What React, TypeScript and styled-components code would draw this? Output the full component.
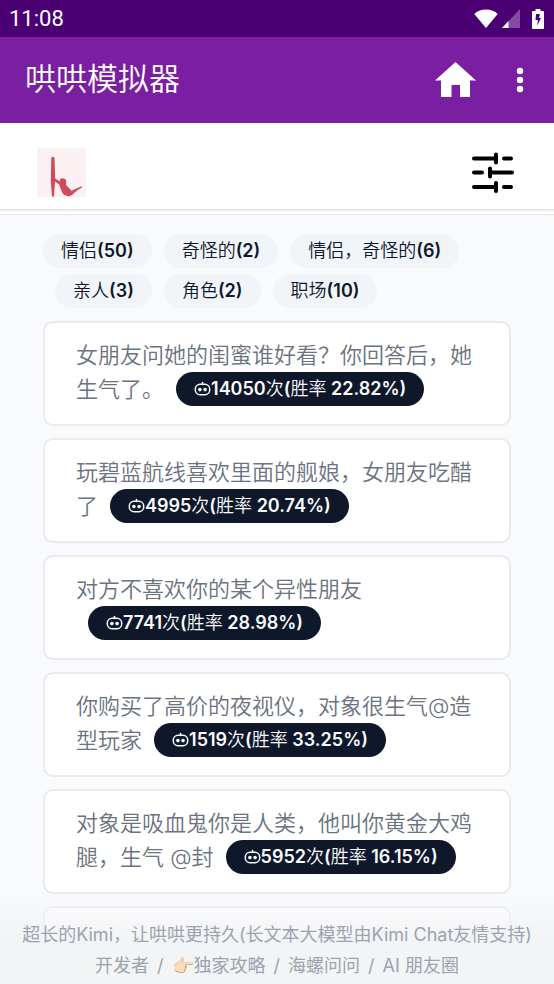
import React from "react";
import styled, { createGlobalStyle } from "styled-components";

const GlobalStyle = createGlobalStyle`
  *, *::before, *::after { box-sizing: border-box; }
  html, body { margin: 0; background: #f8fafc; }
  body { font-family: Inter, "Noto Sans CJK SC", sans-serif; }
  button { font: inherit; color: inherit; border: 0; background: none; padding: 0; cursor: pointer; }
  a { color: inherit; text-decoration: none; }
  svg { display: block; flex: none; }
`;

const Screen = styled.div`
  height: 100vh;
  display: flex;
  flex-direction: column;
  overflow: hidden;
  position: relative;
`;

const StatusBar = styled.div`
  flex: none;
  height: 37px;
  padding: 0 10px 0 9px;
  display: flex;
  align-items: center;
  justify-content: space-between;
  background: #4a0072;
  color: #fff;
  font: 400 22px/1 Roboto, sans-serif;
`;

const StatusIcons = styled.div`
  display: flex;
  align-items: center;
  gap: 4px;
`;

const BatterySlot = styled.span`
  margin-left: 8px;
`;

const AppBar = styled.header`
  flex: none;
  height: 86px;
  padding: 0 24px 0 25px;
  display: flex;
  align-items: center;
  justify-content: space-between;
  background: #7b1fa2;
  color: #fff;
`;

const AppTitle = styled.h1`
  margin: 0;
  font: 350 31px/40px Roboto, "Noto Sans CJK SC", sans-serif;
`;

const AppActions = styled.div`
  display: flex;
  align-items: center;
  gap: 34px;
`;

const SiteHeader = styled.div`
  flex: none;
  height: 92px;
  padding: 25px 39px 0 37px;
  display: flex;
  justify-content: space-between;
  background: linear-gradient(#e5e7eb, #e5e7eb) 0 86px / 100% 2px no-repeat, #fff;
  border-bottom: 1px solid #e5e7eb;
`;

const SettingsButton = styled.button`
  height: 49px;
`;

const Content = styled.main`
  flex: 1;
  min-height: 0;
  overflow: hidden;
  padding: 19px 43px 0;
  background: #f8fafc;
`;

const Tags = styled.nav`
  display: flex;
  flex-wrap: wrap;
  row-gap: 6px;
  margin-bottom: 13px;
`;

const Tag = styled.button`
  height: 34px;
  padding: 0 18px;
  border-radius: 17px;
  background: #f1f5f9;
  color: #0f172a;
  font-size: 18px;
  font-weight: 600;
  line-height: 34px;

  & + & { margin-left: 12px; }
`;

const Label = styled.span`
  font-weight: 350;
`;

const Cards = styled.div`
  display: flex;
  flex-direction: column;
  gap: 12px;
`;

const Card = styled.a`
  display: block;
  flex: none;
  min-height: 105px;
  padding: 15px 30px 16px 31px;
  background: #fff;
  border: 2px solid #e8eaee;
  border-radius: 10px;
  color: #6b7280;
  font-size: 22px;
  font-weight: 350;
  line-height: 34px;
`;

const Stats = styled.span`
  display: inline-flex;
  align-items: center;
  vertical-align: top;
  height: 34px;
  margin-left: 12px;
  padding: 0 18px;
  border-radius: 17px;
  background: #0f172a;
  color: #f8fafc;
  font-size: 18px;
  font-weight: 600;
  white-space: nowrap;
`;

const Footer = styled.footer`
  position: absolute;
  inset: auto 0 0;
  padding: 30px 8px 3px;
  background: linear-gradient(rgba(243, 244, 246, 0), #f3f4f6 50%);
  color: #9ca3af;
  font-size: 18px;
  line-height: 31px;
`;

const FooterLine = styled.div`
  display: flex;
  justify-content: center;
  gap: 8px;
  white-space: nowrap;
`;

const Wifi = () => (
  <svg width="24" height="19" viewBox="0 0 24 19" fill="#fff">
    <path d="M12 19 .3 5C3 2 7 .5 12 .5S21 2 23.700 5z" />
  </svg>
);

const Signal = () => (
  <svg width="18" height="19" viewBox="0 0 18 19">
    <path d="M0 19 18 0v19z" fill="#854ba0" />
    <path d="M0 19 6.500 12v7z" fill="#fff" />
  </svg>
);

const Battery = () => (
  <svg width="12" height="20" viewBox="0 0 12 20">
    <path d="M3.500 0h5v2H11q1 0 1 1v16q0 1-1 1H1q-1 0-1-1V3q0-1 1-1h2.500z" fill="#fff" />
    <path d="M4 5h4L7 9h2l-4 8 1-6H3.500z" fill="#4a0072" />
  </svg>
);

const Home = () => (
  <svg width="41" height="36" viewBox="0 0 41 36" fill="#fff">
    <path d="M20.500 0 41 18.500h-6V35H25V23h-8.500v12H6V18.500H0z" />
  </svg>
);

const Dots = () => (
  <svg width="20" height="26" viewBox="0 0 20 26" fill="#fff">
    <circle cx="10" cy="4" r="3.200" />
    <circle cx="10" cy="13" r="3.200" />
    <circle cx="10" cy="22" r="3.200" />
  </svg>
);

const Logo = () => (
  <svg width="49" height="49" viewBox="0 0 49 49">
    <path d="M0 0h49v49H0z" fill="#fcf1f2" />
    <path
      d="M14.300 10.500c0-2.500 3.200-2.500 3.200 0l.7 20 4.600 3c-1-4.300 6-4.500 6.500-.5.200 1.800-.8 2.600-.2 4l5.400 5.800 9.500-4.300c1.500-.4 1.400.6.5 1.200L40 42.500 35 47l-3.500 1.500-5-2c-2-3-3.500-7.500-4.300-10l-4.200-3L17 48.500h-2L13.800 33z"
      fill="#d14a5b"
    />
  </svg>
);

const Sliders = () => (
  <svg width="44" height="42" viewBox="0 0 44 42" fill="none" stroke="#000" strokeWidth="4" strokeLinecap="round">
    <path d="M3 6.500h22M25 2.500v8M33 6.500h7M3 20.500h8M19 16.500v8M19 20.500h22M3 35h22M25 31v8M33 35h7" />
  </svg>
);

const Robot = () => (
  <svg width="17" height="16" viewBox="0 0 17 16" fill="none" stroke="#f8fafc" strokeWidth="1.500" strokeLinecap="round">
    <rect x="1.300" y="3.300" width="14.400" height="10.400" rx="4.800" />
    <path d="M8.500 1.500v2" />
    <g fill="#f8fafc" stroke="none">
      <circle cx="5.900" cy="8.600" r="1.800" />
      <circle cx="11.100" cy="8.600" r="1.800" />
    </g>
  </svg>
);

const tags = [
  ["情侣", 50],
  ["奇怪的", 2],
  ["情侣，奇怪的", 6],
  ["亲人", 3],
  ["角色", 2],
  ["职场", 10],
] as const;

const scenes = [
  { text: "女朋友问她的闺蜜谁好看？你回答后，她生气了。", count: 14050, rate: "22.82" },
  { text: "玩碧蓝航线喜欢里面的舰娘，女朋友吃醋了", count: 4995, rate: "20.74" },
  { text: "对方不喜欢你的某个异性朋友", count: 7741, rate: "28.98" },
  { text: "你购买了高价的夜视仪，对象很生气@造型玩家", count: 1519, rate: "33.25" },
  { text: "对象是吸血鬼你是人类，他叫你黄金大鸡腿，生气 @封", count: 5952, rate: "16.15" },
];

export default function App() {
  return (
    <Screen lang="zh-CN">
      <GlobalStyle />
      <StatusBar>
        <span>11:08</span>
        <StatusIcons>
          <Wifi />
          <Signal />
          <BatterySlot><Battery /></BatterySlot>
        </StatusIcons>
      </StatusBar>
      <AppBar>
        <AppTitle>哄哄模拟器</AppTitle>
        <AppActions>
          <button aria-label="主页"><Home /></button>
          <button aria-label="更多"><Dots /></button>
        </AppActions>
      </AppBar>
      <SiteHeader>
        <a href="#home" aria-label="首页"><Logo /></a>
        <SettingsButton aria-label="设置"><Sliders /></SettingsButton>
      </SiteHeader>
      <Content>
        <Tags>
          {tags.map(([name, total]) => (
            <Tag key={name}><Label>{name}</Label>({total})</Tag>
          ))}
        </Tags>
        <Cards>
          {scenes.map((s) => (
            <Card key={s.count} href="#scene">
              {s.text}
              <Stats>
                <Robot />
                <span>{s.count}<Label>次</Label>(<Label>胜率</Label> {s.rate}%)</span>
              </Stats>
            </Card>
          ))}
          <Card href="#scene" aria-label="更多场景" />
        </Cards>
      </Content>
      <Footer>
        <FooterLine><a href="#kimi">超长的Kimi，让哄哄更持久(长文本大模型由Kimi Chat友情支持)</a></FooterLine>
        <FooterLine>
          <a href="#dev">开发者</a>
          <span>/</span>
          <a href="#guide">👉🏻独家攻略</a>
          <span>/</span>
          <a href="#hailuo">海螺问问</a>
          <span>/</span>
          <a href="#ai">AI 朋友圈</a>
        </FooterLine>
      </Footer>
    </Screen>
  );
}
